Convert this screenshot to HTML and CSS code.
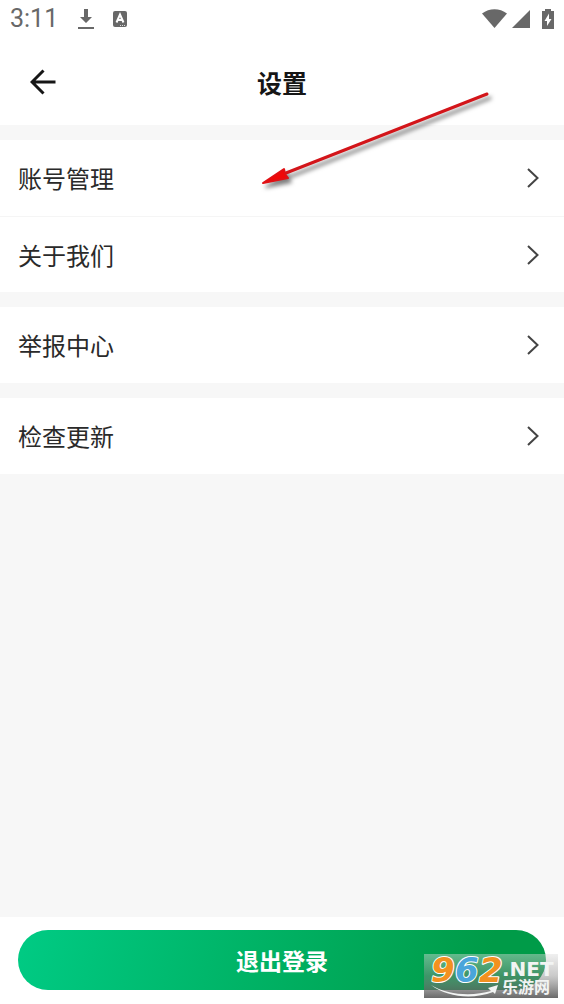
FILE: index.html
```html
<!DOCTYPE html>
<html lang="zh-CN">
<head>
<meta charset="utf-8">
<meta name="viewport" content="width=device-width, initial-scale=1">
<title>设置</title>
<link rel="stylesheet" href="styles.css">
</head>
<body>
<div class="screen">
  <div class="status">
    <div class="status-left">
      <span class="clock">3:11</span>
      <svg class="download" width="16" height="22" viewBox="0 0 16 22" aria-hidden="true"><path d="M6 1h4v8h4l-6 6-6-6h4zM0 19h16v2H0z"/></svg>
      <svg width="16" height="18" viewBox="0 0 16 18" aria-hidden="true"><rect x="1" y="1" width="14" height="16" rx="2"/><path d="M4.500 12.500 8 4.500l3.500 8M6 10h4" fill="none" stroke="#fff" stroke-width="2"/><path d="M8 15.500h1m1 0h1m1 0h1" stroke="#ddd"/></svg>
    </div>
    <div class="status-right">
      <svg width="26" height="20" viewBox="0 0 26 20" aria-hidden="true"><path d="M0 4.500C7.500-1.200 17.500-1.200 25 4.500L12.500 19z"/></svg>
      <svg class="signal" width="18" height="18" viewBox="0 0 18 18" aria-hidden="true"><path d="M18 0v18H0z"/></svg>
      <svg width="12" height="20" viewBox="0 0 12 20" aria-hidden="true"><path d="M3 0h6v2h3v18H0V2h3z"/><path d="M7 4.500 2.500 12H5v5l4.500-7H7z" fill="#fff"/></svg>
    </div>
  </div>
  <header class="header">
    <button class="back" type="button" aria-label="返回">
      <svg width="26" height="26" viewBox="0 0 26 26" aria-hidden="true"><path d="M13.500 1.500 2 13l11.500 11.500M2 13h23.500"/></svg>
    </button>
    <h1 class="title">设置</h1>
  </header>
  <main class="content">
    <nav class="group">
      <a class="row" href="#account">账号管理<svg class="chevron" width="12" height="20" viewBox="0 0 12 20" aria-hidden="true"><path d="M1 1l9.500 9L1 19"/></svg></a>
      <a class="row" href="#about">关于我们<svg class="chevron" width="12" height="20" viewBox="0 0 12 20" aria-hidden="true"><path d="M1 1l9.500 9L1 19"/></svg></a>
    </nav>
    <nav class="group">
      <a class="row" href="#report">举报中心<svg class="chevron" width="12" height="20" viewBox="0 0 12 20" aria-hidden="true"><path d="M1 1l9.500 9L1 19"/></svg></a>
    </nav>
    <nav class="group">
      <a class="row" href="#update">检查更新<svg class="chevron" width="12" height="20" viewBox="0 0 12 20" aria-hidden="true"><path d="M1 1l9.500 9L1 19"/></svg></a>
    </nav>
  </main>
  <footer class="footer">
    <button class="logout" type="button">退出登录</button>
  </footer>
  <svg class="pointer" width="240" height="104" viewBox="0 0 240 104" aria-hidden="true">
    <path d="M231 5 30 84" stroke="#d3151a" stroke-width="3" stroke-linecap="round"/>
    <path d="M7 94 28 80 29 85 32 89z" fill="#f00808" stroke="#e01014" stroke-width="2" stroke-linejoin="round"/>
  </svg>
  <svg class="watermark" width="134" height="44" viewBox="0 0 134 44" role="img" aria-label="962.NET 乐游网">
    <defs>
      <linearGradient id="veil" x2="0" y2="1"><stop offset="0" stop-color="#ddd" stop-opacity=".45"/><stop offset=".5" stop-color="#888" stop-opacity=".45"/><stop offset="1" stop-color="#555" stop-opacity=".88"/></linearGradient>
    </defs>
    <rect width="134" height="44" fill="url(#veil)"/>
    <path d="M7 31C25 42 50 42 67 37L64 34 74 31 71 40 69 38C48 46 23 43 7 31z" fill="#f2f4f3"/>
    <g class="digits">
      <text x="7" y="28" fill="#f29120">9</text><text x="31" y="28" fill="#4aa5da">6</text><text x="55" y="28" fill="#f29120">2</text>
    </g>
    <text class="domain" x="78" y="22">.NET</text>
    <text class="brand" x="78" y="39">乐游网</text>
  </svg>
</div>
</body>
</html>
```
FILE: styles.css
```css
* { box-sizing: border-box; }

body {
  margin: 0;
  background: #f7f7f7;
  color: #222;
  font-family: "Noto Sans CJK SC", sans-serif;
}

svg { display: block; }

.screen {
  position: relative;
  display: flex;
  flex-direction: column;
  min-height: 100vh;
}

.status {
  display: flex;
  align-items: center;
  justify-content: space-between;
  height: 38px;
  padding: 0 10px;
  background: #fff;
  fill: #686868;
}

.status-left,
.status-right { display: flex; align-items: center; }

.status-left { gap: 18px; }

.status-right { gap: 12px; }

.clock {
  margin-right: 2px;
  color: #686868;
  font: 25px/40px Roboto, sans-serif;
}

.signal { margin-left: -8px; }

.header {
  display: grid;
  grid-template-columns: 50px 1fr 50px;
  align-items: center;
  height: 87px;
  padding: 0 18px;
  background: #fff;
}

.back {
  padding: 12px;
  border: 0;
  background: none;
}

.back path {
  fill: none;
  stroke: #161616;
  stroke-width: 3;
}

.title {
  margin: 0;
  color: #161616;
  font-size: 25px;
  font-weight: 700;
  line-height: 36px;
  text-align: center;
}

.content {
  display: flex;
  flex: 1;
  flex-direction: column;
  gap: 15px;
  padding: 15px 0;
}

.group { background: #fff; }

.row {
  display: flex;
  align-items: center;
  justify-content: space-between;
  height: 76px;
  padding: 0 25px 0 18px;
  color: #2a2a2a;
  font-size: 24px;
  line-height: 36px;
  text-decoration: none;
}

.row + .row { border-top: 1px solid #f5f5f5; }

.chevron {
  fill: none;
  stroke: #444;
  stroke-width: 2;
}

.footer {
  padding: 13px 18px 14px;
  background: #fff;
}

.logout {
  display: block;
  width: 100%;
  height: 60px;
  padding: 0;
  border: 0;
  border-radius: 30px;
  background: linear-gradient(105deg, #00cb84, #009b48 88%);
  color: #fff;
  font: 700 23px/34px "Noto Sans CJK SC", sans-serif;
}

.pointer {
  position: absolute;
  top: 89px;
  left: 256px;
  filter: drop-shadow(3px 4px 2px rgba(0, 0, 0, .5));
  pointer-events: none;
}

.watermark {
  position: absolute;
  right: 6px;
  bottom: 6px;
  overflow: visible;
}

.digits {
  font: italic 700 34px "DejaVu Sans", sans-serif;
  stroke: #fff;
  stroke-width: 2px;
  stroke-linejoin: round;
  paint-order: stroke;
}

.domain {
  fill: #f2f4f3;
  font: 700 20px "DejaVu Sans", sans-serif;
}

.brand {
  fill: #f2f4f3;
  font: 700 16px "Noto Sans CJK SC", sans-serif;
}
```
